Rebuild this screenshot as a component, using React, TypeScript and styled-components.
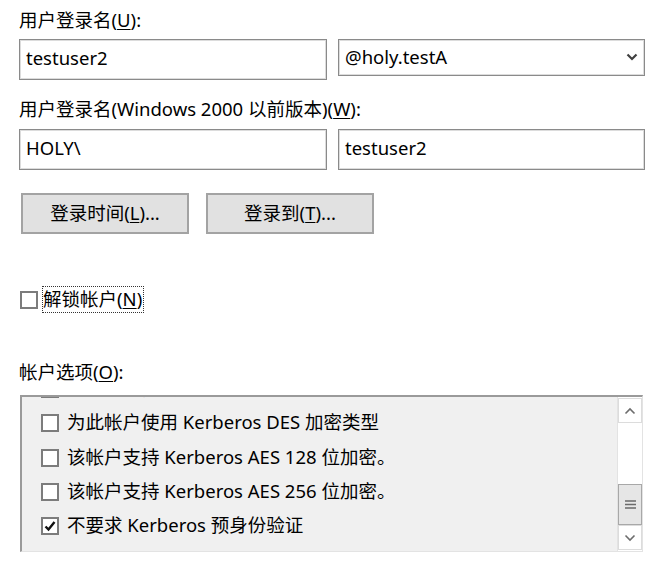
import React from "react";
import styled, { createGlobalStyle } from "styled-components";

const Global = createGlobalStyle`
  html, body { margin: 0; padding: 0; background: #ffffff; }
  body {
    font-family: "Noto Sans", "Noto Sans CJK SC", sans-serif;
    font-size: 18.5px;
    color: #000000;
  }
`;

const Page = styled.div`
  width: 668px;
  height: 562px;
  box-sizing: border-box;
  padding: 9px 0 0 19px;
  display: flex;
  flex-direction: column;
  overflow: hidden;
`;

const Label = styled.div<{ $mt?: number }>`
  height: 22px;
  line-height: 22px;
  margin-top: ${(p) => p.$mt ?? 0}px;
  white-space: nowrap;
`;

const Key = styled.span`
  text-decoration: underline;
  text-underline-offset: 2px;
  text-decoration-thickness: 1px;
`;

const FieldRow = styled.div<{ $mt: number }>`
  display: grid;
  grid-template-columns: 308px 307px;
  column-gap: 11px;
  align-items: start;
  margin-top: ${(p) => p.$mt}px;
`;

const TextBox = styled.div<{ $h?: number }>`
  box-sizing: border-box;
  height: ${(p) => p.$h ?? 41}px;
  border: 1px solid #8a8a8a;
  box-shadow: inset 0 0 0 1px #dcdcdc;
  background: #ffffff;
  padding: 0 0 0 6px;
  display: flex;
  align-items: center;
  line-height: 20px;
  padding-bottom: 4px;
  white-space: nowrap;
`;

const Combo = styled(TextBox)`
  justify-content: space-between;
  padding-right: 6px;
  padding-bottom: 2px;
`;

const ButtonRow = styled.div`
  display: flex;
  gap: 17px;
  margin-top: 23px;
  padding-left: 2px;
`;

const Button = styled.div<{ $w: number }>`
  box-sizing: border-box;
  width: ${(p) => p.$w}px;
  height: 41px;
  background: #e1e1e1;
  border: 2px solid #a3a3a3;
  display: flex;
  align-items: center;
  justify-content: center;
  line-height: 20px;
  padding-bottom: 2px;
  white-space: nowrap;
`;

const CheckRow = styled.div`
  display: flex;
  align-items: center;
  margin-top: 52px;
  height: 27px;
  padding-left: 1px;
`;

const Box = styled.div`
  box-sizing: border-box;
  width: 18px;
  height: 18px;
  border: 2px solid #7c7c7c;
  background: #ffffff;
  flex: none;
  display: flex;
  align-items: center;
  justify-content: center;
`;

const Focus = styled.div`
  box-sizing: border-box;
  height: 27px;
  margin-left: 4px;
  padding: 0 1px 2px 0;
  border: 1px dotted #333;
  display: flex;
  align-items: center;
  line-height: 20px;
  white-space: nowrap;
`;

const ListBox = styled.div`
  box-sizing: border-box;
  margin-top: 12px;
  margin-left: 1px;
  width: 623px;
  height: 157px;
  border-top: 2px solid #9a9a9a;
  border-left: 2px solid #9a9a9a;
  border-right: 1px solid #e3e3e3;
  border-bottom: 1px solid #e3e3e3;
  background: #f0f0f0;
  display: flex;
  overflow: hidden;
`;

const ListContent = styled.div`
  flex: 1;
  overflow: hidden;
`;

const ListInner = styled.div<{ $offset: number }>`
  margin-top: ${(p) => -p.$offset}px;
  padding-left: 19px;
`;

const Item = styled.div`
  height: 34.3px;
  display: flex;
  align-items: center;
  gap: 8px;
  white-space: nowrap;
  line-height: 20px;
`;

const ItemText = styled.span`
  padding-bottom: 2px;
`;

const ScrollBar = styled.div`
  width: 25px;
  flex: none;
  display: flex;
  flex-direction: column;
  background: #ffffff;
  border-left: 1px solid #e3e3e3;
  padding: 1px 0;
  box-sizing: border-box;
`;

const ScrollBtn = styled.div`
  box-sizing: border-box;
  height: 25px;
  border: 1px solid #dcdcdc;
  background: #ffffff;
  display: flex;
  align-items: center;
  justify-content: center;
`;

const Track = styled.div`
  flex: 1;
  display: flex;
  flex-direction: column;
  justify-content: flex-end;
`;

const Thumb = styled.div`
  box-sizing: border-box;
  height: 41px;
  background: #e6e6e6;
  border: 1px solid #a8a8a8;
  display: flex;
  align-items: center;
  justify-content: center;
`;

const Chevron = ({ up }: { up?: boolean }) => (
  <svg width="12" height="8" viewBox="0 0 12 8">
    <path
      d={up ? "M1.5 6.5 L6 2 L10.5 6.5" : "M1.5 1.5 L6 6 L10.5 1.5"}
      fill="none"
      stroke="#6d6d6d"
      strokeWidth="1.6"
    />
  </svg>
);

const ComboChevron = () => (
  <svg width="12" height="8" viewBox="0 0 12 8">
    <path d="M1.5 1.5 L6 6 L10.5 1.5" fill="none" stroke="#404040" strokeWidth="2.2" />
  </svg>
);

const Grip = () => (
  <svg width="11" height="11" viewBox="0 0 11 11">
    <path d="M0 2 H11 M0 5.5 H11 M0 9 H11" stroke="#6a6a6a" strokeWidth="1.6" />
  </svg>
);

const Tick = () => (
  <svg width="14" height="14" viewBox="0 0 14 14">
    <path d="M2.5 7.5 L5.5 10.5 L11.5 3" fill="none" stroke="#111" strokeWidth="2.4" />
  </svg>
);

const items: { text: string; checked: boolean }[] = [
  { text: "敏感帐户，不能被委派", checked: false },
  { text: "为此帐户使用 Kerberos DES 加密类型", checked: false },
  { text: "该帐户支持 Kerberos AES 128 位加密。", checked: false },
  { text: "该帐户支持 Kerberos AES 256 位加密。", checked: false },
  { text: "不要求 Kerberos 预身份验证", checked: true },
];

export default function App() {
  return (
    <>
      <Global />
      <Page>
        <Label>
          用户登录名(<Key>U</Key>):
        </Label>
        <FieldRow $mt={8}>
          <TextBox>testuser2</TextBox>
          <Combo $h={37}>
            <span>@holy.testA</span>
            <ComboChevron />
          </Combo>
        </FieldRow>
        <Label $mt={18}>
          用户登录名(Windows 2000 以前版本)(<Key>W</Key>):
        </Label>
        <FieldRow $mt={9}>
          <TextBox>HOLY\</TextBox>
          <TextBox>testuser2</TextBox>
        </FieldRow>
        <ButtonRow>
          <Button $w={168}>
            登录时间(<Key>L</Key>)...
          </Button>
          <Button $w={168}>
            登录到(<Key>T</Key>)...
          </Button>
        </ButtonRow>
        <CheckRow>
          <Box />
          <Focus>
            解锁帐户(<Key>N</Key>)
          </Focus>
        </CheckRow>
        <Label $mt={48}>
          帐户选项(<Key>O</Key>):
        </Label>
        <ListBox>
          <ListContent>
            <ListInner $offset={25}>
              {items.map((it) => (
                <Item key={it.text}>
                  <Box>{it.checked && <Tick />}</Box>
                  <ItemText>{it.text}</ItemText>
                </Item>
              ))}
            </ListInner>
          </ListContent>
          <ScrollBar>
            <ScrollBtn>
              <Chevron up />
            </ScrollBtn>
            <Track>
              <Thumb>
                <Grip />
              </Thumb>
            </Track>
            <ScrollBtn>
              <Chevron />
            </ScrollBtn>
          </ScrollBar>
        </ListBox>
      </Page>
    </>
  );
}
